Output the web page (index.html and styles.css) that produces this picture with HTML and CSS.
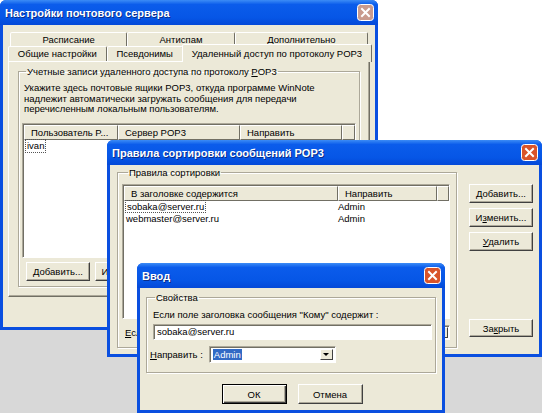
FILE: index.html
```html
<!DOCTYPE html>
<html lang="ru">
<head>
  <meta charset="UTF-8">
  <title>Настройки почтового сервера</title>
  <link rel="stylesheet" href="styles.css">
</head>
<body>
  <div class="desktop">

    <!-- main settings window (inactive) -->
    <div class="window w-main">
      <div class="titlebar">
        <span class="title">Настройки почтового сервера</span>
        <svg class="close inactive" width="17" height="17" viewBox="0 0 17 17"><rect x="0.5" y="0.5" width="16" height="16" rx="3"/><path d="M5 5l7 7M12 5l-7 7"/></svg>
      </div>
      <div class="body main-body">
        <div class="tab-row back">
          <div class="tab">Расписание</div>
          <div class="tab">Антиспам</div>
          <div class="tab">Дополнительно</div>
        </div>
        <div class="tab-row">
          <div class="tab">Общие настройки</div>
          <div class="tab">Псевдонимы</div>
          <div class="tab active">Удаленный доступ по протоколу POP3</div>
        </div>
        <div class="tab-panel">
          <fieldset class="group main-group">
            <legend>Учетные записи удаленного доступа по протоколу <u>P</u>OP3</legend>
            <p class="desc">Укажите здесь почтовые ящики POP3, откуда программе WinNote надлежит автоматически загружать сообщения для передачи перечисленным локальным пользователям.</p>
            <div class="listview lv-accounts">
              <div class="lv-head">
                <div class="col c-user">Пользователь P...</div>
                <div class="col c-server">Сервер POP3</div>
                <div class="col c-to">Направить</div>
                <div class="col c-rest"></div>
              </div>
              <div class="lv-row"><span class="focus">ivan</span></div>
            </div>
            <div class="btn-row">
              <button class="btn"><u>Д</u>обавить...</button>
              <button class="btn">Изменить...</button>
            </div>
          </fieldset>
        </div>
      </div>
    </div>

    <!-- sorting rules window -->
    <div class="window w-rules">
      <div class="titlebar">
        <span class="title">Правила сортировки сообщений POP3</span>
        <svg class="close" width="17" height="17" viewBox="0 0 17 17"><rect x="0.5" y="0.5" width="16" height="16" rx="3"/><path d="M5 5l7 7M12 5l-7 7"/></svg>
      </div>
      <div class="body rules-body">
        <fieldset class="group rules-group">
          <legend>Правила сортировки</legend>
          <div class="listview lv-rules">
            <div class="lv-head">
              <div class="col c-header">В заголовке содержится</div>
              <div class="col c-dest">Направить</div>
              <div class="col c-rest"></div>
            </div>
            <div class="lv-row">
              <span class="cell c-header"><span class="focus">sobaka@server.ru</span></span>
              <span class="cell">Admin</span>
            </div>
            <div class="lv-row">
              <span class="cell c-header">webmaster@server.ru</span>
              <span class="cell">Admin</span>
            </div>
          </div>
          <div class="default-row">
            <span class="label"><u>Е</u>сли</span>
            <span class="combo small"><span class="combo-text"></span><span class="drop"></span></span>
          </div>
        </fieldset>
        <div class="side-buttons">
          <button class="btn"><u>Д</u>обавить...</button>
          <button class="btn">И<u>з</u>менить...</button>
          <button class="btn"><u>У</u>далить</button>
          <button class="btn close-btn">За<u>к</u>рыть</button>
        </div>
      </div>
    </div>

    <!-- input dialog -->
    <div class="window w-input">
      <div class="titlebar">
        <span class="title">Ввод</span>
        <svg class="close" width="17" height="17" viewBox="0 0 17 17"><rect x="0.5" y="0.5" width="16" height="16" rx="3"/><path d="M5 5l7 7M12 5l-7 7"/></svg>
      </div>
      <div class="body input-body">
        <fieldset class="group input-group">
          <legend>Свойства</legend>
          <div class="field-label">Если поле заголовка сообщения "Кому" содержит :</div>
          <div class="edit">sobaka@server.ru</div>
          <div class="dest-row">
            <span class="label"><u>Н</u>аправить :</span>
            <span class="combo"><span class="combo-text"><span class="selected">Admin</span></span><span class="drop"></span></span>
          </div>
        </fieldset>
        <div class="dialog-buttons">
          <button class="btn default">ОК</button>
          <button class="btn">Отмена</button>
        </div>
      </div>
    </div>

  </div>
</body>
</html>
```

FILE: styles.css
```css
* {
  box-sizing: border-box;
}

body {
  margin: 0;
  width: 542px;
  height: 413px;
  overflow: hidden;
  background: linear-gradient(#ffffff 0 250px, #d8d8d8 250px);
  font-family: "Liberation Sans", Arial, sans-serif;
  font-size: 9.5px;
  color: #000;
}

u {
  text-decoration: underline;
}

.desktop {
  position: relative;
  width: 542px;
  height: 413px;
}

/* windows */

.window {
  position: absolute;
  display: flex;
  flex-direction: column;
  background: #0a4fe0;
  border-radius: 6px 6px 0 0;
  overflow: hidden;
}

.w-main {
  left: 0;
  top: 0;
  width: 378px;
  height: 330px;
}

.w-rules {
  left: 107px;
  top: 140px;
  width: 435px;
  height: 217px;
}

.w-input {
  left: 137px;
  top: 263px;
  width: 308px;
  height: 150px;
}

.titlebar {
  height: 25px;
  flex: none;
  display: flex;
  align-items: center;
  justify-content: space-between;
  padding: 0 4px 0 5px;
  background: linear-gradient(#3c8cf6, #0b5ceb 18%, #0656e6 70%, #0449d8);
  color: #fff;
  font-size: 11px;
  font-weight: bold;
  text-shadow: 1px 1px #0a2d8a;
}

.close rect {
  fill: #d9542a;
  stroke: #fff;
}

.close path {
  stroke: #fff;
  stroke-width: 2;
  stroke-linecap: square;
}

.close.inactive rect {
  fill: #c99b8e;
}

.body {
  flex: 1;
  margin: 0 3px 3px;
  background: #ece9d8;
}

/* classic controls */

.btn {
  display: block;
  width: 64px;
  height: 19px;
  padding: 0;
  font: inherit;
  color: #000;
  background: #ece9d8;
  border: 1px solid;
  border-color: #fff #404040 #404040 #fff;
  box-shadow: inset -1px -1px #aca899;
  text-align: center;
}

.btn.default {
  outline: 1px solid #000;
  outline-offset: -1px;
  border-color: #000;
  box-shadow: inset 1px 1px #fff, inset -1px -1px #404040, inset -2px -2px #aca899;
}

.group {
  margin: 0;
  border: 1px solid #aca899;
  box-shadow: 1px 1px #fff, inset 1px 1px #fff;
  min-width: 0;
}

.group legend {
  padding: 0 1px;
  line-height: 11px;
}

.listview {
  background: #fff;
  border: 1px solid;
  border-color: #aca899 #fff #fff #aca899;
  box-shadow: inset 1px 1px #716f64;
  padding: 1px 0 0 1px;
  overflow: hidden;
}

.lv-head {
  display: flex;
  height: 15px;
}

.lv-head .col {
  flex: none;
  height: 15px;
  line-height: 13px;
  padding-left: 6px;
  background: #ece9d8;
  border: 1px solid;
  border-color: #fff #716f64 #716f64 #fff;
  white-space: nowrap;
  overflow: hidden;
}

.lv-head .c-rest {
  flex: 1;
}

.lv-row {
  display: flex;
  height: 12px;
  line-height: 12px;
  padding-left: 2px;
  white-space: nowrap;
}

.focus {
  outline: 1px dotted #555;
  outline-offset: 0;
  padding: 0 1px;
}

.edit,
.combo {
  background: #fff;
  border: 1px solid;
  border-color: #aca899 #fff #fff #aca899;
  box-shadow: inset 1px 1px #716f64;
}

.combo {
  display: flex;
  align-items: stretch;
  padding: 2px;
}

.combo-text {
  flex: 1;
  line-height: 11px;
  padding-left: 1px;
}

.selected {
  background: #316ac5;
  color: #fff;
  padding: 0 1px;
}

.drop {
  width: 13px;
  flex: none;
  background: #ece9d8;
  border: 1px solid;
  border-color: #fff #404040 #404040 #fff;
  display: flex;
  align-items: center;
  justify-content: center;
}

.drop::after {
  content: "";
  border-left: 3px solid transparent;
  border-right: 3px solid transparent;
  border-top: 3px solid #000;
}

/* main window */

.main-body {
  padding: 6px 5px 0;
}

.tab-row {
  display: flex;
  height: 15px;
}

.tab-row.back {
  margin: 1px 2px 0;
  height: 14px;
}

.tab {
  flex: 1 1 auto;
  text-align: center;
  line-height: 13px;
  white-space: nowrap;
  background: #ece9d8;
  border: 1px solid;
  border-bottom: none;
  border-color: #fff #716f64 transparent #fff;
  border-radius: 2px 2px 0 0;
}

.tab.active {
  position: relative;
  z-index: 1;
  margin: -2px -2px -1px -1px;
  line-height: 17px;
}

.tab-panel {
  height: 236px;
  padding: 4px 9px 0;
  border: 1px solid;
  border-color: #fff #716f64 #716f64 #fff;
  box-shadow: inset -1px -1px #aca899;
}

.main-group {
  height: 221px;
  padding: 6px 3px 4px;
  display: flex;
  flex-direction: column;
}

.main-group legend {
  margin-left: 4px;
}

.desc {
  margin: 0;
  padding-left: 2px;
  line-height: 10.5px;
  width: 310px;
}

.lv-accounts {
  margin-top: 8px;
  height: 135px;
}

.c-user { width: 94px; }
.c-server { width: 122px; }
.c-to { width: 102px; }

.btn-row {
  display: flex;
  gap: 5px;
  margin-top: 4px;
  padding-left: 4px;
}

/* rules window */

.rules-body {
  display: flex;
  padding: 2px 6px 6px 7px;
  gap: 12px;
}

.rules-group {
  flex: 1;
  padding: 6px 6px 6px 4px;
}

.rules-group legend {
  margin-left: 6px;
}

.lv-rules {
  height: 135px;
}

.c-header { width: 214px; }
.c-dest { width: 99px; }

.lv-rules .lv-row .cell.c-header {
  width: 212px;
}

.default-row {
  display: flex;
  align-items: center;
  gap: 6px;
  margin-top: 6px;
  height: 15px;
  padding-left: 3px;
}

.combo.small {
  flex: 1;
  height: 15px;
  padding: 1px;
  margin-left: 140px;
}

.side-buttons {
  width: 64px;
  display: flex;
  flex-direction: column;
  gap: 5px;
  padding-top: 17px;
}

.side-buttons .btn {
  height: 19px;
}

.side-buttons .close-btn {
  margin-top: auto;
  margin-bottom: 11px;
  height: 18px;
}

/* input dialog */

.input-body {
  padding: 4px 6px 0;
}

.input-group {
  height: 81px;
  padding: 6px 3px 0;
}

.input-group legend {
  margin-left: 5px;
}

.field-label {
  line-height: 11px;
  padding-left: 3px;
}

.edit {
  margin: 4px 0 0 3px;
  height: 16px;
  line-height: 13px;
  padding-left: 3px;
}

.dest-row {
  display: flex;
  align-items: center;
  gap: 6px;
  margin-top: 6px;
}

.dest-row .combo {
  width: 127px;
  height: 17px;
}

.dialog-buttons {
  display: flex;
  justify-content: center;
  gap: 11px;
  margin-top: 11px;
  padding-left: 2px;
}

.dialog-buttons .btn {
  width: 65px;
  height: 20px;
}
```
